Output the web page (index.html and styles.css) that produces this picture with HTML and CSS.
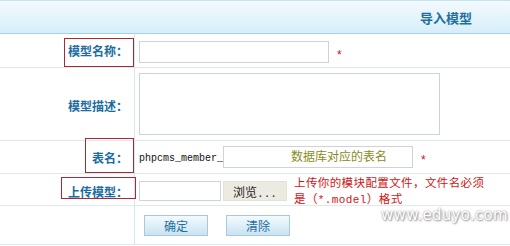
FILE: index.html
```html
<!DOCTYPE html>
<html lang="zh-CN">
<head>
    <meta charset="UTF-8">
    <meta name="viewport" content="width=device-width, initial-scale=1.0">
    <title>导入模型</title>
    <link rel="stylesheet" href="styles.css">
</head>
<body>
    <div class="panel">
        <div class="panel-head">
            <h2>导入模型</h2>
        </div>

        <div class="form-row row-name">
            <div class="label"><span class="mark mark-name"></span>模型名称：</div>
            <div class="field">
                <input type="text" class="text-input wide">
                <span class="required">*</span>
            </div>
        </div>

        <div class="form-row row-desc">
            <div class="label">模型描述：</div>
            <div class="field">
                <textarea class="text-area"></textarea>
            </div>
        </div>

        <div class="form-row row-table">
            <div class="label"><span class="mark mark-table"></span>表名：</div>
            <div class="field">
                <span class="prefix">phpcms_member_</span>
                <input type="text" class="text-input wide hint" value="数据库对应的表名">
                <span class="required">*</span>
            </div>
        </div>

        <div class="form-row row-upload">
            <div class="label"><span class="mark mark-upload"></span>上传模型：</div>
            <div class="field">
                <input type="text" class="text-input file-path">
                <button type="button" class="browse-btn">浏览<span class="mono">...</span></button>
                <p class="upload-tip">上传你的模块配置文件，文件名必须<br>是（<span class="mono">*.model</span>）格式</p>
            </div>
        </div>

        <div class="form-row row-actions">
            <div class="label"></div>
            <div class="field">
                <button type="submit" class="action-btn">确定</button>
                <button type="reset" class="action-btn">清除</button>
            </div>
        </div>

        <div class="watermark">www.eduyo.com</div>
    </div>
</body>
</html>
```

FILE: styles.css
```css
:root {
    --label-blue: #1c6c9f;
    --row-line: #dfe8ef;
    --col-line: #d3e6f1;
    --input-line: #cfd3d6;
    --mark-red: #a92a35;
    --tip-red: #d21414;
}

* {
    box-sizing: border-box;
}

body {
    margin: 0;
    background: #ffffff;
    font-family: "Noto Sans CJK SC", "Liberation Sans", sans-serif;
    font-size: 12px;
    color: #222;
}

.panel {
    position: relative;
    width: 510px;
}

/* Header bar */
.panel-head {
    height: 34px;
    border-top: 1px solid #c4e3f1;
    border-bottom: 1px solid #a3d3e8;
    background: linear-gradient(#f3fafd, #d6eef9);
    display: flex;
    align-items: center;
    justify-content: flex-end;
    padding-right: 38px;
}

.panel-head h2 {
    margin: 0;
    font-size: 13px;
    font-weight: bold;
    color: #1f6e9e;
}

/* Form rows */
.form-row {
    display: grid;
    grid-template-columns: 135px 1fr;
    border-bottom: 1px solid var(--row-line);
}

.row-name { height: 34px; }
.row-desc { height: 73px; }
.row-table { height: 33px; }
.row-upload { height: 32px; }
.row-actions { height: 39px; }

.label {
    position: relative;
    display: flex;
    align-items: center;
    justify-content: flex-end;
    padding-right: 6px;
    border-right: 1px solid var(--col-line);
    font-weight: bold;
    color: var(--label-blue);
    white-space: nowrap;
}

.row-desc .label {
    padding-top: 2px;
}

.field {
    display: flex;
    align-items: center;
    padding-left: 4px;
}

.row-name .field {
    padding-top: 3px;
}

/* Red annotation boxes */
.mark {
    position: absolute;
    border: 1px solid var(--mark-red);
}

.mark-name {
    left: 64px;
    top: 4px;
    width: 70px;
    height: 29px;
}

.mark-table {
    left: 85px;
    top: -3px;
    width: 49px;
    height: 35px;
}

.mark-upload {
    left: 61px;
    top: 3px;
    width: 75px;
    height: 22px;
}

/* Inputs */
.text-input {
    height: 22px;
    border: 1px solid var(--input-line);
    background: #fff;
    font-family: "Noto Sans CJK SC", sans-serif;
    font-size: 12px;
    padding: 0 4px;
    margin: 0;
}

.wide {
    width: 190px;
}

.hint {
    color: #8a8a1c;
    padding-left: 67px;
    padding-bottom: 3px;
}

.text-area {
    width: 301px;
    height: 62px;
    border: 1px solid var(--input-line);
    margin: 0;
    resize: none;
}

.required {
    color: #c4142a;
    font-family: "Liberation Sans", sans-serif;
    font-size: 12px;
    margin-left: 8px;
    padding-top: 6px;
}

.prefix {
    font-family: "Liberation Mono", monospace;
    font-size: 10px;
    color: #111;
    padding-top: 3px;
    width: 84px;
}

/* Upload */
.file-path {
    width: 82px;
    height: 20px;
}

.browse-btn {
    width: 64px;
    height: 20px;
    margin: 0 0 0 2px;
    padding: 0;
    border: 1px solid #e4e2d8;
    background: #ecebe2;
    font-family: "Noto Sans CJK SC", sans-serif;
    font-size: 12px;
    color: #222;
}

.mono {
    font-family: "Liberation Mono", monospace;
    font-size: 11px;
}

.upload-tip {
    margin: 0 0 0 7px;
    color: var(--tip-red);
    line-height: 16px;
    font-size: 11.5px;
    letter-spacing: 0.4px;
    white-space: nowrap;
}

/* Action buttons */
.action-btn {
    width: 64px;
    height: 21px;
    margin: 0 0 0 5px;
    padding: 0;
    border: 1px solid #a9c8dc;
    background: linear-gradient(#f4fafd, #c9e3f2);
    font-family: "Noto Sans CJK SC", sans-serif;
    font-size: 12px;
    color: #1d6fa3;
}

.action-btn + .action-btn {
    margin-left: 18px;
}

/* Site watermark */
.watermark {
    position: absolute;
    left: 381px;
    top: 206px;
    font-family: "DejaVu Sans", sans-serif;
    font-size: 15px;
    letter-spacing: 0.3px;
    color: #ffffff;
    text-shadow: 0 0 2px #8a8a8a, 1px 1px 2px #9a9a9a;
}
```
